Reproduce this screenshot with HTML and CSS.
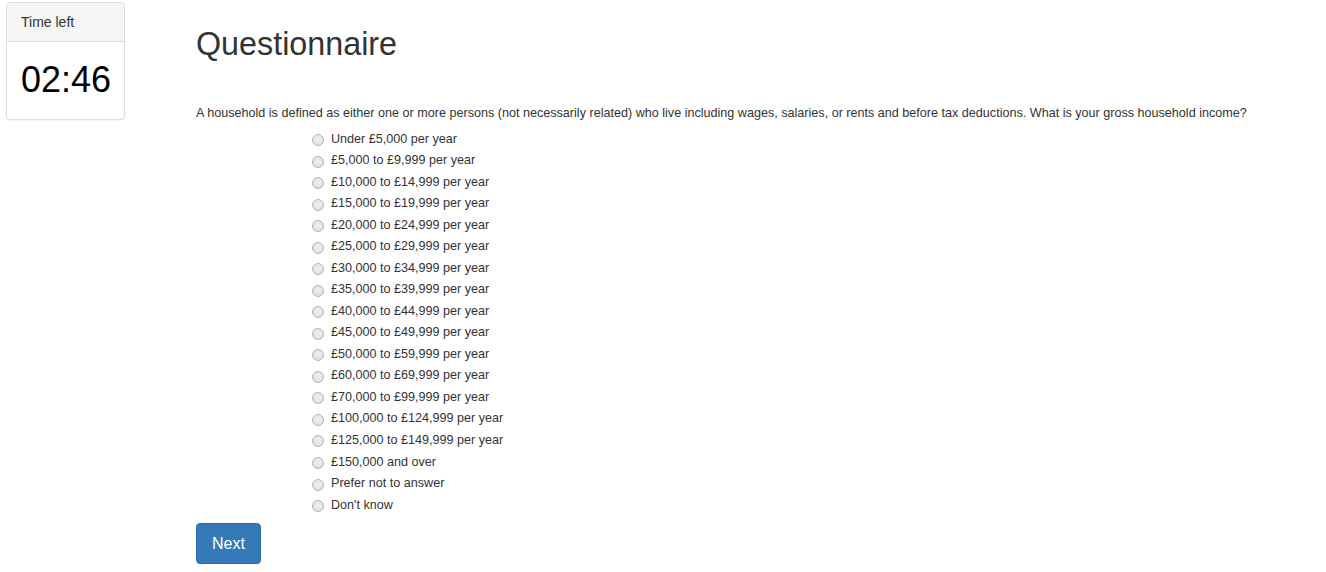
FILE: index.html
```html
<!DOCTYPE html>
<html lang="en">
<head>
<meta charset="utf-8">
<title>Questionnaire</title>
<link rel="stylesheet" href="styles.css">
</head>
<body>
<div class="page">
  <aside class="sidebar">
    <div class="panel">
      <div class="panel-heading">Time left</div>
      <div class="panel-body">02:46</div>
    </div>
  </aside>
  <main class="content">
    <h2 class="title">Questionnaire</h2>
    <form class="form">
      <p class="question">A household is defined as either one or more persons (not necessarily related) who live including wages, salaries, or rents and before tax deductions. What is your gross household income?</p>
      <ul class="choices">
        <li class="choice"><label><input type="radio" name="income"> Under £5,000 per year</label></li>
        <li class="choice"><label><input type="radio" name="income"> £5,000 to £9,999 per year</label></li>
        <li class="choice"><label><input type="radio" name="income"> £10,000 to £14,999 per year</label></li>
        <li class="choice"><label><input type="radio" name="income"> £15,000 to £19,999 per year</label></li>
        <li class="choice"><label><input type="radio" name="income"> £20,000 to £24,999 per year</label></li>
        <li class="choice"><label><input type="radio" name="income"> £25,000 to £29,999 per year</label></li>
        <li class="choice"><label><input type="radio" name="income"> £30,000 to £34,999 per year</label></li>
        <li class="choice"><label><input type="radio" name="income"> £35,000 to £39,999 per year</label></li>
        <li class="choice"><label><input type="radio" name="income"> £40,000 to £44,999 per year</label></li>
        <li class="choice"><label><input type="radio" name="income"> £45,000 to £49,999 per year</label></li>
        <li class="choice"><label><input type="radio" name="income"> £50,000 to £59,999 per year</label></li>
        <li class="choice"><label><input type="radio" name="income"> £60,000 to £69,999 per year</label></li>
        <li class="choice"><label><input type="radio" name="income"> £70,000 to £99,999 per year</label></li>
        <li class="choice"><label><input type="radio" name="income"> £100,000 to £124,999 per year</label></li>
        <li class="choice"><label><input type="radio" name="income"> £125,000 to £149,999 per year</label></li>
        <li class="choice"><label><input type="radio" name="income"> £150,000 and over</label></li>
        <li class="choice"><label><input type="radio" name="income"> Prefer not to answer</label></li>
        <li class="choice"><label><input type="radio" name="income"> Don't know</label></li>
      </ul>
      <button type="button" class="btn-next">Next</button>
    </form>
  </main>
</div>
</body>
</html>
```
FILE: styles.css
```css
html, body {
  margin: 0;
  padding: 0;
  background: #fff;
}
body {
  font-family: "Liberation Sans", Arial, Helvetica, sans-serif;
  color: #333;
  font-size: 14px;
  line-height: 1.42857;
}
.page {
  display: flex;
  align-items: flex-start;
}
.sidebar {
  padding: 2px 0 0 6px;
  width: 119px;
  flex: none;
}
.panel {
  border: 1px solid #ddd;
  border-radius: 4px;
  background: #fff;
  box-shadow: 0 1px 1px rgba(0,0,0,0.05);
}
.panel-heading {
  background: #f5f5f5;
  border-bottom: 1px solid #ddd;
  border-radius: 3px 3px 0 0;
  padding: 9px 14px 9px;
  line-height: 20px;
  font-size: 14px;
  color: #333;
}
.panel-body {
  padding: 15px 14px 16px;
  font-size: 36px;
  line-height: 46px;
  color: #000;
}
.content {
  margin-left: 71px;
  padding-top: 27px;
  flex: 1;
}
.title {
  margin: 0;
  font-size: 32.3px;
  font-weight: 400;
  line-height: 35px;
  color: #333;
}
.form {
  margin: 0;
}
.question {
  margin: 43px 0 0;
  font-size: 12.6px;
  line-height: 17px;
}
.choices {
  list-style: none;
  margin: 7px 0 0;
  padding: 0 0 0 112px;
}
.choice {
  height: 21.53px;
  display: flex;
  align-items: center;
  font-size: 12.6px;
}
.choice label {
  display: flex;
  align-items: center;
}
.choice input {
  appearance: none;
  -webkit-appearance: none;
  width: 12px;
  height: 12px;
  margin: 1px 7px 0 4px;
  border-radius: 50%;
  border: 1px solid #b4b4b4;
  background: radial-gradient(circle at 50% 40%, #f0f0f0 0%, #e2e2e2 70%, #d8d8d8 100%);
  box-sizing: border-box;
  flex: none;
}
.btn-next {
  margin-top: 7px;
  font-family: "Liberation Sans", Arial, sans-serif;
  font-size: 16px;
  line-height: 21px;
  padding: 9px 15px;
  color: #fff;
  background: #337ab7;
  border: 1px solid #2e6da4;
  border-radius: 4px;
  cursor: pointer;
}
```
